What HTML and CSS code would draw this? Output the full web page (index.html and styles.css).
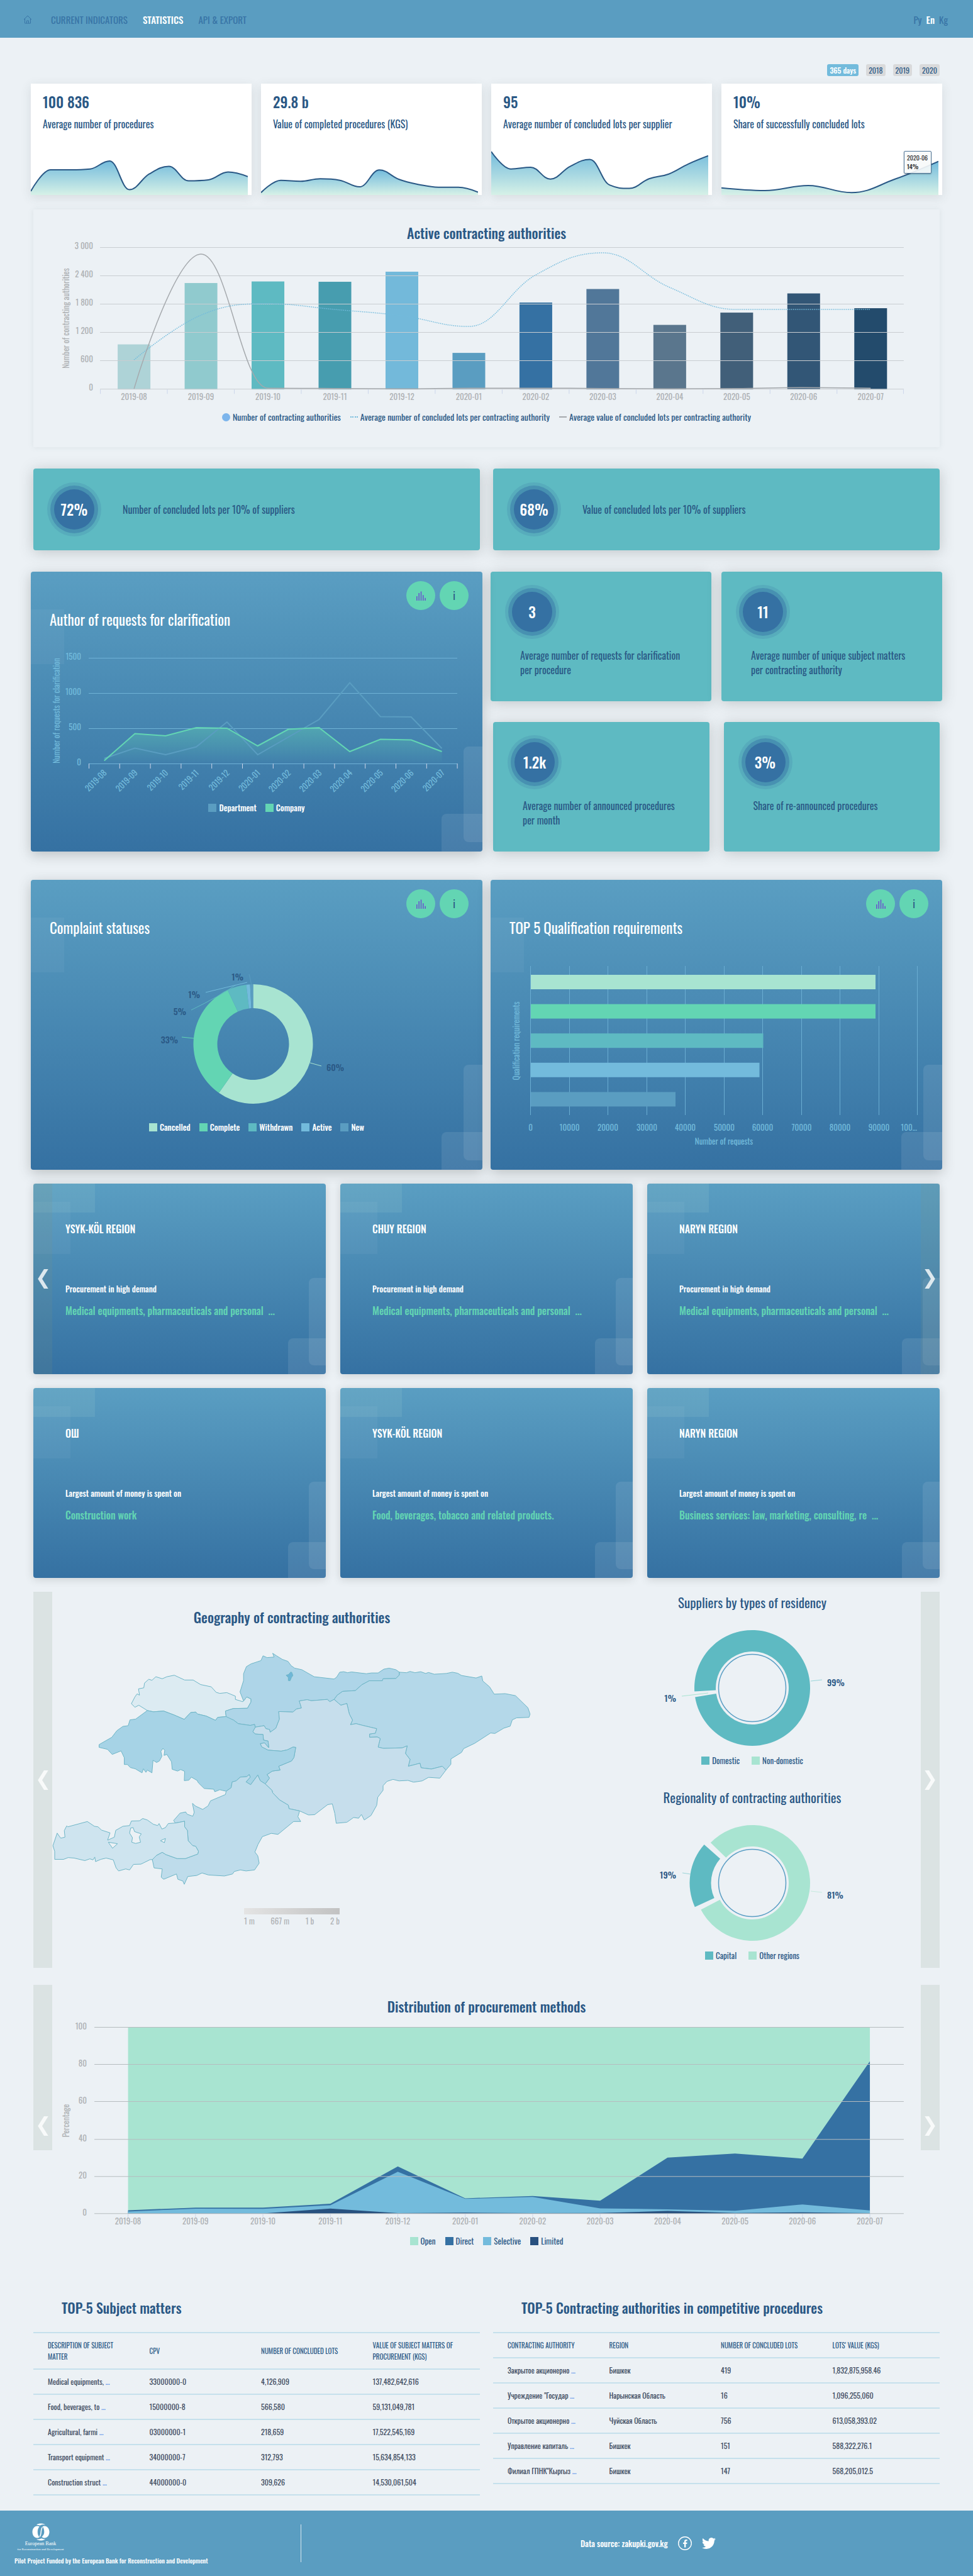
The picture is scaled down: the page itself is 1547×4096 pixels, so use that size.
FILE: index.html
```html
<!DOCTYPE html>
<html lang="en">
<head>
<meta charset="utf-8">
<meta name="viewport" content="width=device-width, initial-scale=1">
<title>Procurement statistics</title>
<link rel="stylesheet" href="styles.css">
</head>
<body>
<svg class="defs" aria-hidden="true">
  <defs>
    <linearGradient id="spark-fill" x1="0" y1="0" x2="0" y2="1">
      <stop offset="0" stop-color="#73bbdc"/><stop offset="1" stop-color="#d6f1e7"/>
    </linearGradient>
    <linearGradient id="company-fill" x1="0" y1="0" x2="0" y2="1">
      <stop offset="0" stop-color="#63d5b3" stop-opacity=".4"/><stop offset="1" stop-color="#63d5b3" stop-opacity="0"/>
    </linearGradient>
    <symbol id="i-bars" viewBox="0 0 18 18"><path d="M0 18V9.500h2V18zM4 18V3.500h2V18zM8 18V.5h2V18zM12 18V7.500h2V18zM16 18v-5h2v5z"/></symbol>
    <symbol id="i-prev" viewBox="0 0 18 32"><path d="M11 0h7L8 16l10 16h-7L1 16z"/></symbol>
    <symbol id="i-next" viewBox="0 0 18 32"><path d="M7 0H0l10 16L0 32h7l10-16z"/></symbol>
  </defs>
</svg>

<header class="topbar">
  <nav class="topbar-nav">
    <a href="#" aria-label="Home"><svg class="home" viewBox="0 0 14 14"><path d="M1 7l6-6 6 6M2.500 6v7h9V6M5.500 13V9h3v4"/></svg></a>
    <a href="#">CURRENT INDICATORS</a>
    <a href="#" class="active">STATISTICS</a>
    <a href="#">API &amp; EXPORT</a>
  </nav>
  <nav class="langs"><a href="#">Ру</a><a href="#" class="active">En</a><a href="#">Kg</a></nav>
</header>

<main>
  <div class="periods">
    <button class="active">365 days</button><button>2018</button><button>2019</button><button>2020</button>
  </div>

  <section class="kpis">
    <article class="kpi"><h2>100 836</h2><p>Average number of procedures</p><svg class="spark" viewBox="0 0 345 80" preserveAspectRatio="none" data-points="74,40,40,38.700,26,71.500,46.700,34.600,57.500,56,43.500,50.800"></svg></article>
    <article class="kpi"><h2>29.8 b</h2><p>Value of completed procedures (KGS)</p><svg class="spark" viewBox="0 0 345 80" preserveAspectRatio="none" data-points="76.300,56.700,58.300,54.300,56.700,67.100,40.300,55.300,63.400,67.700,67.700,75.500"></svg></article>
    <article class="kpi"><h2>95</h2><p>Average number of concluded lots per supplier</p><svg class="spark" viewBox="0 0 345 80" preserveAspectRatio="none" data-points="11,38.700,36,54.800,34.600,23.400,64.200,69.600,54.300,46.700,30.600,17.700"></svg></article>
    <article class="kpi"><h2>10%</h2><p>Share of successfully concluded lots</p><svg class="spark" viewBox="0 0 345 80" preserveAspectRatio="none" data-points="68.800,73,65,76.300,54.800,26.600"></svg><div class="tip">2020-06<b>14%</b></div></article>
  </section>

  <section class="panel">
    <h2 class="title">Active contracting authorities</h2>
    <svg id="authorities" viewBox="0 0 1440 258"></svg>
    <ul class="legend">
      <li><i class="dot"></i>Number of contracting authorities</li>
      <li><i class="dotted"></i>Average number of concluded lots per contracting authority</li>
      <li><i class="dash"></i>Average value of concluded lots per contracting authority</li>
    </ul>
  </section>

  <section class="banners">
    <article class="teal banner"><b class="bubble">72%</b><p>Number of concluded lots per 10% of suppliers</p></article>
    <article class="teal banner"><b class="bubble">68%</b><p>Value of concluded lots per 10% of suppliers</p></article>
  </section>

  <section class="halves">
    <article class="blue chart-card author">
      <div class="tools"><button aria-label="Chart"><svg><use href="#i-bars"/></svg></button><button aria-label="Info">i</button></div>
      <h2>Author of requests for clarification</h2>
      <svg id="requests" viewBox="0 0 718 238"></svg>
      <ul class="legend light"><li><i class="c-steel"></i>Department</li><li><i class="c-green"></i>Company</li></ul>
    </article>
    <div class="facts">
      <div class="fact-row">
        <article class="teal fact"><b class="bubble">3</b><p>Average number of requests for clarification<br>per procedure</p></article>
        <article class="teal fact"><b class="bubble">11</b><p>Average number of unique subject matters<br>per contracting authority</p></article>
      </div>
      <div class="fact-row inset">
        <article class="teal fact"><b class="bubble">1.2k</b><p>Average number of announced procedures<br>per month</p></article>
        <article class="teal fact"><b class="bubble">3%</b><p>Share of re-announced procedures</p></article>
      </div>
    </div>
  </section>

  <section class="halves second">
    <article class="blue chart-card complaint">
      <div class="tools"><button aria-label="Chart"><svg><use href="#i-bars"/></svg></button><button aria-label="Info">i</button></div>
      <h2>Complaint statuses</h2>
      <svg id="complaints" viewBox="0 0 718 256"></svg>
      <ul class="legend light"><li><i class="c-mint"></i>Cancelled</li><li><i class="c-green"></i>Complete</li><li><i class="c-teal"></i>Withdrawn</li><li><i class="c-sky"></i>Active</li><li><i class="c-steel"></i>New</li></ul>
    </article>
    <article class="blue chart-card qualification">
      <div class="tools"><button aria-label="Chart"><svg><use href="#i-bars"/></svg></button><button aria-label="Info">i</button></div>
      <h2>TOP 5 Qualification requirements</h2>
      <svg id="qualification" viewBox="0 0 718 306"></svg>
    </article>
  </section>

  <section class="regions">
    <button class="side prev" aria-label="Previous"><svg><use href="#i-prev"/></svg></button>
    <article class="blue region"><h3>YSYK-KÖL REGION</h3><p>Procurement in high demand</p><strong>Medical equipments, pharmaceuticals and personal &nbsp;...</strong></article>
    <article class="blue region"><h3>CHUY REGION</h3><p>Procurement in high demand</p><strong>Medical equipments, pharmaceuticals and personal &nbsp;...</strong></article>
    <article class="blue region"><h3>NARYN REGION</h3><p>Procurement in high demand</p><strong>Medical equipments, pharmaceuticals and personal &nbsp;...</strong></article>
    <button class="side next" aria-label="Next"><svg><use href="#i-next"/></svg></button>
  </section>
  <section class="regions">
    <article class="blue region"><h3>ОШ</h3><p>Largest amount of money is spent on</p><strong>Construction work</strong></article>
    <article class="blue region"><h3>YSYK-KÖL REGION</h3><p>Largest amount of money is spent on</p><strong>Food, beverages, tobacco and related products.</strong></article>
    <article class="blue region"><h3>NARYN REGION</h3><p>Largest amount of money is spent on</p><strong>Business services: law, marketing, consulting, re &nbsp;...</strong></article>
  </section>

  <section class="geo">
    <button class="side prev" aria-label="Previous"><svg><use href="#i-prev"/></svg></button>
    <div class="geo-map">
      <h2 class="title">Geography of contracting authorities</h2>
      <svg class="map" viewBox="90 270 1350 950" preserveAspectRatio="none">
        <path fill="#dcebf2" d="M313 487L323 460 329 448 336 453 333 428 348 424 350 405 362 390 371 394 382 380 400 388 413 380 434 374 463 393 487 393 508 411 538 420 552 442 562 446 582 443 606 457 606 470 627 479 638 460 650 468 650 480 640 505 600 506 578 516 580 538 556 541 550 553 524 536 500 528 494 520 480 522 462 549 434 532 404 516 375 519 358 514 334 493 323 501Z"/>
        <path fill="#aed5e8" d="M619 440L629 395 629 368 637 340 650 329 678 316 684 297 695 304 715 302 711 287 722 297 738 311 754 319 763 336 773 346 793 352 828 380 884 389 891 382 900 362 911 360 922 364 933 361 975 368 989 365 1008 365 1024 350 1039 346 1058 352 1068 362 1068 373 1058 387 1022 388 1020 396 983 396 962 412 944 435 908 438 893 453 884 470 872 479 865 470 820 475 808 471 786 476 792 504 778 508 768 520 728 518 730 548 720 584 704 600 702 589 692 586 687 574 662 580 660 569 648 573 614 566 601 552 580 540 578 516 600 506 640 505 650 480 650 468 638 460 629 476Z"/>
        <path fill="#b4d8e9" d="M884 470L893 453 908 438 944 435 962 412 983 396 1020 396 1022 388 1058 387 1068 373 1068 362 1088 364 1098 359 1112 364 1128 360 1142 367 1150 363 1166 370 1200 367 1217 362 1232 366 1243 375 1284 385 1300 377 1303 397 1322 420 1335 449 1366 447 1395 455 1430 503 1436 528 1433 541 1398 543 1386 551 1380 576 1362 584 1337 605 1325 603 1280 644 1249 665 1243 680 1213 706 1213 727 1199 750 1189 735 1158 746 1129 741 1126 723 1093 735 1098 708 1085 684 1090 654 1076 662 1023 664 1008 659 1014 625 1006 619 984 620 984 607 1000 604 1004 586 962 572 946 566 930 570 936 552 927 528 920 486 903 493Z"/>
        <path fill="#c6deec" d="M884 470L903 493 920 486 927 528 936 552 930 570 946 566 962 572 1004 586 1000 604 984 607 984 620 1006 619 1014 625 1008 659 1023 664 1076 662 1090 654 1085 684 1098 708 1093 735 1126 723 1129 741 1158 746 1189 735 1199 750 1182 782 1150 779 1132 793 1108 798 1092 791 1067 793 1050 787 1033 795 1022 812 1022 830 1007 858 1004 890 988 930 969 948 961 926 953 941 939 938 920 957 890 961 886 922 879 884 866 887 829 927 812 928 787 912 757 903 755 889 730 868 711 840 709 830 690 805 702 782 695 768 710 754 732 750 728 735 764 714 771 700 776 660 768 659 752 670 735 675 698 671 680 658 676 645 688 642 700 661 698 635 685 631 684 609 662 607 655 598 662 580 687 574 692 586 702 589 704 600 720 584 730 548 728 518 768 520 778 508 792 504 786 476 808 471 820 475 865 470 872 479Z"/>
        <path fill="#a6d3e6" d="M358 514L375 519 404 516 434 532 462 549 480 522 494 520 500 528 524 536 550 553 556 541 580 538 601 552 614 566 648 573 660 569 662 580 655 598 662 607 684 609 685 631 698 635 700 661 688 642 676 645 680 658 698 671 735 675 752 670 768 659 776 660 771 700 764 714 728 735 732 750 710 754 695 768 702 782 690 805 676 792 669 770 649 808 636 797 648 778 645 768 638 776 620 778 608 793 597 797 594 820 580 834 562 828 548 836 545 826 518 823 502 801 498 791 482 778 475 790 462 792 463 755 452 748 443 754 428 747 426 717 413 688 405 692 407 672 402 664 396 676 399 695 392 714 384 720 374 711 371 761 358 750 354 759 347 745 343 761 324 745 310 740 302 728 293 728 293 701 284 674 259 688 246 668 222 660 222 649 258 620 272 594 289 577 304 574 309 551 325 548Z"/>
        <path fill="#bedceb" d="M580 834L594 820 597 797 608 793 620 778 638 776 645 768 648 778 636 797 649 808 669 770 676 792 690 805 709 830 711 840 730 868 755 889 757 903 787 912 782 935 790 954 770 954 726 1005 707 1001 682 1014 670 1044 661 1075 669 1090 673 1119 660 1146 636 1150 620 1146 603 1152 598 1162 575 1170 530 1166 512 1158 497 1168 472 1172 462 1203 458 1190 444 1183 440 1162 404 1183 397 1175 400 1142 377 1138 372 1105 384 1088 400 1076 410 1085 442 1101 465 1101 500 1083 502 1072 494 1052 486 1050 473 1030 471 990 463 975 463 953 437 960 432 950 450 921 466 916 470 925 486 933 490 918 485 882 494 893 514 906 529 892 536 872 578 847Z"/>
        <path fill="#cee4ef" fill-rule="evenodd" d="M437 960L463 953 463 975 471 990 473 1030 486 1050 494 1052 502 1072 500 1083 465 1101 442 1101 410 1085 400 1076 384 1088 372 1105 366 1105 340 1123 319 1124 308 1146 297 1142 277 1150 270 1138 262 1106 242 1099 227 1104 212 1113 210 1095 205 1106 196 1102 182 1109 152 1099 135 1097 122 1104 97 1104 97 1072 92 1050 104 1000 114 1020 126 1016 124 990 131 971 134 975 189 954 209 973 219 975 229 988 253 999 246 1028 265 1016 269 989 289 973 308 970 313 952 336 951 345 942 358 948 375 965 387 970 391 962 399 984 409 978 417 962ZM311 980L318 978 322 994 341 1003 335 1015 339 1036 325 1041 314 1036 316 1018 308 1000ZM395 1030L409 1021 406 1038ZM248 1036L274 1042 260 1060Z"/>
        <path fill="#6fb7d8" d="M749 374L756 371 762 361 765 363 768 375 764 383 760 396 755 395 755 383Z"/>
      </svg>
      <div class="scale"><div class="scale-bar"></div><div class="scale-labels"><span>1 m</span><span>667 m</span><span>1 b</span><span>2 b</span></div></div>
    </div>
    <div class="geo-donuts">
      <h2 class="title plain">Suppliers by types of residency</h2>
      <svg id="residency" viewBox="0 0 536 209"></svg>
      <ul class="legend wide"><li><i class="c-teal"></i>Domestic</li><li><i class="c-mint"></i>Non-domestic</li></ul>
      <h2 class="title plain">Regionality of contracting authorities</h2>
      <svg id="regionality" viewBox="0 0 536 209"></svg>
      <ul class="legend wide"><li><i class="c-teal"></i>Capital</li><li><i class="c-mint"></i>Other regions</li></ul>
    </div>
    <button class="side next" aria-label="Next"><svg><use href="#i-next"/></svg></button>
  </section>

  <section class="methods">
    <button class="side prev" aria-label="Previous"><svg><use href="#i-prev"/></svg></button>
    <h2 class="title">Distribution of procurement methods</h2>
    <svg id="methods" viewBox="0 0 1440 346"></svg>
    <ul class="legend"><li><i class="c-mint"></i>Open</li><li><i class="c-blue"></i>Direct</li><li><i class="c-sky"></i>Selective</li><li><i class="c-navy"></i>Limited</li></ul>
    <button class="side next" aria-label="Next"><svg><use href="#i-next"/></svg></button>
  </section>

  <section class="tables">
    <div>
      <h2>TOP-5 Subject matters</h2>
      <table>
        <thead><tr><th>DESCRIPTION OF SUBJECT<br>MATTER</th><th>CPV</th><th>NUMBER OF CONCLUDED LOTS</th><th>VALUE OF SUBJECT MATTERS OF PROCUREMENT (KGS)</th></tr></thead>
        <tbody>
          <tr><td>Medical equipments, <a href="#">...</a></td><td>33000000-0</td><td>4,126,909</td><td>137,482,642,616</td></tr>
          <tr><td>Food, beverages, to <a href="#">...</a></td><td>15000000-8</td><td>566,580</td><td>59,131,049,781</td></tr>
          <tr><td>Agricultural, farmi <a href="#">...</a></td><td>03000000-1</td><td>218,659</td><td>17,522,545,169</td></tr>
          <tr><td>Transport equipment <a href="#">...</a></td><td>34000000-7</td><td>312,793</td><td>15,634,854,133</td></tr>
          <tr><td>Construction struct <a href="#">...</a></td><td>44000000-0</td><td>309,626</td><td>14,530,061,504</td></tr>
        </tbody>
      </table>
    </div>
    <div>
      <h2>TOP-5 Contracting authorities in competitive procedures</h2>
      <table>
        <thead><tr><th>CONTRACTING AUTHORITY</th><th>REGION</th><th>NUMBER OF CONCLUDED LOTS</th><th>LOTS' VALUE (KGS)</th></tr></thead>
        <tbody>
          <tr><td>Закрытое акционерно <a href="#">...</a></td><td>Бишкек</td><td>419</td><td>1,832,875,958.46</td></tr>
          <tr><td>Учреждение "Государ <a href="#">...</a></td><td>Нарынская Область</td><td>16</td><td>1,096,255,060</td></tr>
          <tr><td>Открытое акционерно <a href="#">...</a></td><td>Чуйская Область</td><td>756</td><td>613,058,393.02</td></tr>
          <tr><td>Управление капиталь <a href="#">...</a></td><td>Бишкек</td><td>151</td><td>588,322,276.1</td></tr>
          <tr><td>Филиал ГПНК"Кыргыз <a href="#">...</a></td><td>Бишкек</td><td>147</td><td>568,205,012.5</td></tr>
        </tbody>
      </table>
    </div>
  </section>
</main>

<footer>
  <div class="funder">
    <div class="bank">
      <svg viewBox="0 0 28 28"><path d="M8.500 4.500C3.500 4.500.5 9 .5 14s3 9.500 8 9.500c1.500 0 2.500-.5 3.200-1.200C9.500 20 8.800 17 8.800 14s.7-6.500 3-8.600C10.800 4.800 9.800 4.500 8.500 4.500zM19.500 4.500c5 0 8 4.500 8 9.500s-3 9.500-8 9.500c-1.500 0-3-.6-4-1.800 2.500-2 3.800-4.700 3.800-7.700S18.500 7 16.500 5.500c1-.7 2-1 3-1zM7 2.500C9 1 11.500.5 14 .5s5 .5 7 2c-3-.6-6-.3-8.500 1.200C10.500 3 9 2.700 7 2.500zM7 25.500c2 1.500 4.500 2 7 2s5-.5 7-2c-2 0-4-.3-6-1.200-2.500 1.200-5 1.500-8 1.200z"/><path class="s" d="M16.500 6.500C13 10 15.500 18 12 21.500"/></svg>
      <b>European Bank</b><small>for Reconstruction and Development</small>
    </div>
    <p>Pilot Project Funded by the European Bank for Reconstruction and Development</p>
  </div>
  <div class="source">
    <span>Data source: zakupki.gov.kg</span>
    <a href="#" aria-label="Facebook"><svg viewBox="0 0 24 24"><circle cx="12" cy="12" r="11.200" fill="none" stroke="#fff" stroke-width="1.500"/><path d="M13.500 19v-6h2l.4-2.500h-2.400V9c0-.8.3-1.200 1.300-1.200H16V5.600c-.4 0-1-.1-1.800-.1-2 0-3.300 1.100-3.300 3.200v1.800H8.800V13h2.100v6z"/></svg></a>
    <a href="#" aria-label="Twitter"><svg viewBox="0 0 24 24"><path d="M23.953 4.570a10 10 0 01-2.825.775 4.958 4.958 0 002.163-2.723c-.951.555-2.005.959-3.127 1.184a4.920 4.920 0 00-8.384 4.482C7.690 8.095 4.067 6.130 1.640 3.162a4.822 4.822 0 00-.666 2.475c0 1.710.87 3.213 2.188 4.096a4.904 4.904 0 01-2.228-.616v.06a4.923 4.923 0 003.946 4.827 4.996 4.996 0 01-2.212.085 4.936 4.936 0 004.604 3.417 9.867 9.867 0 01-6.102 2.105c-.39 0-.779-.023-1.170-.067a13.995 13.995 0 007.557 2.209c9.053 0 13.998-7.496 13.998-13.985 0-.21 0-.42-.015-.63A9.935 9.935 0 0024 4.590z"/></svg></a>
  </div>
</footer>
<script src="charts.js"></script>
</body>
</html>
```
FILE: styles.css
```css
* { box-sizing: border-box; }
body {
  margin: 0;
  background: #ecf1f5;
  color: #2a5885;
  font-family: Oswald, "Roboto Condensed", "DejaVu Sans Condensed", sans-serif;
  font-size: 13px;
  line-height: 20px;
}
h2, h3, p, ul { margin: 0; padding: 0; }
h2, h3, b, strong { font-weight: 500; }
button { font: inherit; border: 0; padding: 0; cursor: pointer; }
a { text-decoration: none; }
svg { display: block; overflow: visible; }
.defs { position: absolute; width: 0; height: 0; }

.topbar {
  display: flex;
  justify-content: space-between;
  align-items: center;
  height: 60px;
  padding: 2px 40px 0 37px;
  background: #5a9dc1;
  font-size: 15px;
}
.topbar a { color: #3874a6; }
.topbar a.active { color: #fff; font-weight: 500; }
.topbar-nav { display: flex; align-items: center; gap: 24px; }
.topbar-nav a:first-child { margin-right: 6px; }
.home { width: 14px; height: 14px; fill: none; stroke: #3874a6; }
.langs { display: flex; gap: 7px; }

main { padding: 42px 49px 24px; }

.periods { display: flex; justify-content: flex-end; gap: 12px; padding-right: 4px; }
.periods button {
  height: 19px;
  padding: 0 4px;
  border-radius: 3px;
  background: #d9dadb;
  color: #2a5885;
  font-size: 12px;
  line-height: 19px;
}
.periods .active { background: #73bbdc; color: #fff; font-weight: 500; }

.kpis { display: grid; grid-template-columns: repeat(4, 1fr); gap: 15px; margin-top: 12px; }
.kpi { position: relative; background: #fff; padding: 14px 0 0; box-shadow: 0 4px 16px rgba(60, 70, 70, .12); }
.kpi h2 { padding-left: 19px; font-size: 23px; line-height: 30px; }
.kpi p { padding: 8px 0 0 19px; font-size: 16px; line-height: 24px; }
.spark { width: calc(100% - 6px); height: 80px; margin-top: 21px; overflow: hidden; }
.tip {
  position: absolute;
  right: 17px;
  bottom: 34px;
  display: flex;
  flex-direction: column;
  width: 44px;
  padding: 3px 4px;
  border: 1px solid #52789a;
  border-radius: 2px;
  background: rgba(247, 249, 250, .9);
  color: #333;
  font-size: 10px;
  line-height: 14px;
  box-shadow: 0 1px 2px rgba(0, 0, 0, .3);
}

.panel { margin: 23px 4px 0; padding: 22px 0 38px; box-shadow: 0 0 8px rgba(120, 150, 150, .15); }
.title { text-align: center; font-size: 22px; line-height: 30px; }
.panel .title, .methods .title { margin-bottom: 2px; }
.title.plain { font-size: 21px; font-weight: normal; }

.legend { display: flex; justify-content: center; gap: 15px; list-style: none; }
.legend li { display: flex; align-items: center; gap: 4px; }
.legend i { width: 13px; height: 13px; }
.legend.wide { gap: 19px; }
.legend.light { color: #fff; font-weight: 500; gap: 14px; }
.panel .legend { margin-top: 8px; font-size: 14px; }
.legend .dot { border-radius: 50%; background: #7cb5ec; }
.legend .dotted { width: 12px; height: 0; border-top: 2px dotted #73bbdc; }
.legend .dash { width: 12px; height: 2px; background: #a5a9ad; }
.c-mint { background: #a8e4d1; }
.c-green { background: #63d5b3; }
.c-teal { background: #5ebac2; }
.c-sky { background: #73bbdc; }
.c-steel { background: #5a9dc1; }
.c-blue { background: #3571a3; }
.c-navy { background: #28517f; }

.teal { background: #5ebac2; border-radius: 4px; box-shadow: 0 3px 22px rgba(60, 70, 70, .25); font-size: 16px; line-height: 23px; }
.banners { display: grid; grid-template-columns: 1fr 1fr; gap: 21px; margin: 34px 4px 0; }
.banner { display: flex; align-items: center; gap: 45px; height: 130px; padding-left: 33px; }
.bubble {
  display: flex;
  align-items: center;
  justify-content: center;
  flex: none;
  width: 64px;
  height: 64px;
  border-radius: 50%;
  background: #3571a3;
  box-shadow: 0 0 0 6px rgba(53, 113, 163, .45), 0 0 0 11px rgba(53, 113, 163, .18);
  color: #fff;
  font-size: 23px;
}

.halves { display: grid; grid-template-columns: 1fr 1fr; gap: 13px; margin-top: 34px; }
.halves.second { margin-top: 45px; }
.blue {
  position: relative;
  overflow: hidden;
  border-radius: 4px;
  background: linear-gradient(#5a9ec2, #3571a2);
  color: #fff;
}
.blue::before, .blue::after { content: ""; position: absolute; right: 0; background: rgba(255, 255, 255, .09); }
.blue::after { width: 65px; height: 60px; bottom: 0; border-radius: 8px 0 0 0; }
.blue::before { width: 30px; height: 152px; bottom: 15px; border-radius: 8px 0 0 8px; }
.chart-card { display: flow-root; padding-top: 15px; }
.halves > * { min-width: 0; }
.halves > .blue { box-shadow: 0 5px 20px rgba(60, 70, 70, .28); background: linear-gradient(rgba(255, 255, 255, .04), rgba(255, 255, 255, .04)) 0 60px / 53px 87px no-repeat, linear-gradient(#5a9ec2, #3571a2); }
.tools { display: flex; justify-content: flex-end; gap: 7px; padding-right: 22px; }
.tools button {
  display: flex;
  align-items: center;
  justify-content: center;
  width: 46px;
  height: 46px;
  border-radius: 50%;
  background: #63d5b3;
  color: #2a5885;
  font-size: 16px;
}
.tools svg { width: 15px; height: 15px; fill: #6a5acd; }
.chart-card h2 { padding-left: 30px; margin: 0 0 34px; font-size: 23px; font-weight: normal; line-height: 30px; }
.chart-card .legend { margin-top: 2px; }
.author { padding-bottom: 60px; }
.complaint { padding-bottom: 58px; }
.qualification { padding-bottom: 30px; }

.facts { display: flex; flex-direction: column; justify-content: space-between; gap: 33px; }
.fact-row { display: grid; grid-template-columns: 1fr 1fr; gap: 16px; flex: 1; }
.fact-row.inset { padding: 0 4px; gap: 23px; }
.fact { padding: 32px 8px 0 34px; }
.fact p { padding: 26px 0 0 13px; }

.regions { position: relative; display: grid; grid-template-columns: repeat(3, 1fr); gap: 23px; margin: 22px 4px 0; }
.region { height: 303px; padding: 62px 20px 0 51px; box-shadow: 0 2px 14px rgba(60, 70, 70, .2); background:
  linear-gradient(rgba(170, 215, 210, .13), rgba(170, 215, 210, .13)) 0 0 / 98px 46px no-repeat,
  linear-gradient(rgba(255, 255, 255, .04), rgba(255, 255, 255, .04)) 0 29px / 59px 83px no-repeat,
  linear-gradient(#5a9ec2, #3571a2); }
.region::after { width: 60px; height: 57px; }
.region::before { width: 27px; height: 139px; bottom: 14px; }
.region h3 { font-size: 16px; line-height: 20px; }
.region p { margin-top: 75px; font-size: 13px; font-weight: 500; line-height: 20px; }
.region strong { display: block; margin-top: 13px; color: #63d5b3; font-size: 16px; line-height: 24px; white-space: nowrap; }
.regions + .regions .region { height: 302px; }

.side { display: flex; align-items: center; justify-content: center; width: 30px; background: rgba(130, 145, 130, .15); }
.side svg { width: 18px; height: 31px; fill: rgba(255, 255, 255, .8); }
.regions .side, .methods .side { position: absolute; top: 0; z-index: 1; }
.side.prev { left: 0; }
.side.next { right: 0; }
.regions .side { height: 100%; }

.geo { display: grid; grid-template-columns: 30px 762fr 83px 536fr 30px; margin: 22px 4px 0; }
.geo-map { padding-top: 25px; }
.geo-donuts { grid-column: 4; padding: 2px 0 10px; }
.map { width: 100%; height: 381px; margin-top: 36px; }
.map path { stroke: #6db5c6; stroke-width: 1px; vector-effect: non-scaling-stroke; stroke-linejoin: round; }
.scale { width: 152px; margin: 31px auto 0; color: #b0b3b6; }
.scale-bar { height: 10px; background: linear-gradient(90deg, #e4e4e4, #c2c2c2); }
.scale-labels { display: flex; justify-content: space-between; }
.geo-donuts svg { margin-top: 17px; }
.geo-donuts .legend + .title { margin-top: 34px; }

.methods { position: relative; margin: 27px 4px 0; padding-top: 19px; }
.methods .side { height: 263px; padding-top: 186px; }

.axis { fill: #adb0b3; font-size: 13px; }
.axis.sky { fill: #73bbdc; }
.grid { stroke: #c9cdd1; stroke-width: 1; }
.pct { fill: #2a5885; font-size: 14px; font-weight: 500; }

.tables { display: grid; grid-template-columns: 1fr 1fr; gap: 21px; margin: 81px 4px 0; }
.tables h2 { padding-left: 45px; margin-bottom: 24px; font-size: 22px; line-height: 30px; }
table { width: 100%; table-layout: fixed; border-collapse: collapse; border-top: 2px solid #c5e0ec; font-size: 12px; line-height: 18px; }
th, td { padding: 10px 8px 10px 0; border-bottom: 2px solid #c5e0ec; text-align: left; }
th { width: 25%; font-size: 11px; font-weight: normal; }
th:first-child, td:first-child { width: 26%; padding-left: 23px; }
th:last-child { width: 24%; }
td { color: #3c4a5e; }
td a { color: #4a86e8; }

footer { display: flex; height: 104px; background: #5a9dc1; color: #fff; font-weight: 500; }
footer svg { fill: #fff; }
.funder { width: 478px; padding: 20px 0 0 23px; }
.bank { display: flex; flex-direction: column; align-items: center; width: 83px; font-family: "Liberation Serif", serif; white-space: nowrap; }
.bank svg { width: 28px; height: 28px; }
.bank .s { fill: none; stroke: #fff; stroke-width: 1.500; }
.bank b { font-size: 8px; line-height: 10px; }
.bank small { font-size: 5px; line-height: 7px; }
.funder p { margin-top: 7px; font-size: 10px; line-height: 16px; }
.source { flex: 1; display: flex; align-items: center; gap: 16px; font-size: 13px; }
.source::before { content: ""; height: 60px; border-left: 1px solid #d7e6ef; margin-right: 428px; }
.source svg { width: 22px; height: 22px; }
```
FILE: charts.js
```js
const months = ['2019-08', '2019-09', '2019-10', '2019-11', '2019-12', '2020-01', '2020-02', '2020-03', '2020-04', '2020-05', '2020-06', '2020-07'];
const draw = (id, html) => { document.getElementById(id).innerHTML = html; };
const poly = (pts) => 'M' + pts.map((p) => p.join(' ')).join('L');
const text = (x, y, t, anchor = 'middle', cls = 'axis', extra = '') => `<text x="${x}" y="${y}" class="${cls}" text-anchor="${anchor}" ${extra}>${t}</text>`;
const hline = (x1, x2, y, color = '#c9cdd1') => `<path class="grid" style="stroke:${color}" d="M${x1} ${y}H${x2}"/>`;

// Smooth line that never overshoots a local extreme.
function spline(pts) {
  let d = `M${pts[0]}`;
  let out = pts[0];
  for (let i = 1; i < pts.length; i++) {
    const [x, y] = pts[i];
    const [px, py] = pts[i - 1];
    let inn = [x, y];
    let nextOut = [x, y];
    if (i < pts.length - 1) {
      const [nx, ny] = pts[i + 1];
      const lx = (1.5 * x + px) / 2.5, rx = (1.5 * x + nx) / 2.5;
      let ly = (1.5 * y + py) / 2.5, ry = (1.5 * y + ny) / 2.5;
      const c = ((ry - ly) * (rx - x)) / (rx - lx) + y - ry;
      ly += c; ry += c;
      if (ly > py && ly > y) { ly = Math.max(py, y); ry = 2 * y - ly; } else if (ly < py && ly < y) { ly = Math.min(py, y); ry = 2 * y - ly; }
      if (ry > ny && ry > y) { ry = Math.max(ny, y); ly = 2 * y - ry; } else if (ry < ny && ry < y) { ry = Math.min(ny, y); ly = 2 * y - ry; }
      inn = [lx, ly];
      nextOut = [rx, ry];
    }
    d += `C${out} ${inn} ${[x, y]}`;
    out = nextOut;
  }
  return d;
}

// Ring segment, angles in degrees clockwise from the top.
function ring(cx, cy, R, r, a, b, fill) {
  const at = (rad, deg) => { const t = (deg - 90) * Math.PI / 180; return [cx + rad * Math.cos(t), cy + rad * Math.sin(t)]; };
  const big = b - a > 180 ? 1 : 0;
  return `<path fill="${fill}" d="M${at(R, a)}A${R} ${R} 0 ${big} 1 ${at(R, b)}L${at(r, b)}A${r} ${r} 0 ${big} 0 ${at(r, a)}Z"/>`;
}

document.querySelectorAll('.spark').forEach((svg) => {
  const ys = svg.dataset.points.split(',').map(Number);
  const d = spline(ys.map((y, i) => [i * 345 / (ys.length - 1), y]));
  svg.innerHTML = `<path d="${d}V80H0Z" fill="url(#spark-fill)"/><path d="${d}" fill="none" stroke="#2a5885" stroke-width="2"/>`;
});

{
  const tops = [160.5, 63, 60.5, 61, 45, 174, 94, 72.500, 129.500, 110, 79.500, 103];
  const colors = ['#aed3d7', '#90cace', '#5ebac2', '#479daf', '#73b9da', '#5a9dc1', '#3571a3', '#517799', '#5a768d', '#415f79', '#325676', '#234b6c'];
  const lots = [185, 114, 96, 105, 115, 132, 50, 15, 70, 105, 105, 105];
  const value = [231, 17, 230, 230.500, 231, 230, 230, 230.500, 231, 230.500, 229, 230];
  const cx = (i) => 160 + i * 106.4;
  let s = '';
  tops.forEach((y, i) => { s += `<rect x="${cx(i) - 26}" y="${y}" width="52" height="${232 - y}" fill="${colors[i]}"/>`; });
  for (let i = 0; i < 6; i++) {
    s += hline(106, 1383, 6.5 + i * 45);
    s += text(95, 9 + i * 45, ['3 000', '2 400', '1 800', '1 200', '600', '0'][i], 'end');
  }
  months.forEach((m, i) => { s += `<path stroke="#ccd6eb" d="M${106.5 + i * 106.4} 232v7"/>` + text(cx(i), 249, m); });
  s += `<path stroke="#ccd6eb" d="M1382.500 232v7"/>`;
  s += `<path d="${spline(lots.map((y, i) => [cx(i), y]))}" fill="none" stroke="#73bbdc" stroke-width="1.500" stroke-dasharray="1.500 1.500"/>`;
  s += `<path d="${spline(value.map((y, i) => [cx(i), y]))}" fill="none" stroke="#a5a9ad" stroke-width="1.500"/>`;
  s += text(0, 0, 'Number of contracting authorities', 'middle', 'axis', 'transform="translate(57 119) rotate(-90)"');
  draw('authorities', s);
}

{
  const dep = [172, 155.500, 166, 153.500, 114, 166, 138, 110, 51.500, 105.500, 106, 156];
  const com = [175.500, 132.500, 136, 123, 124, 152, 125.500, 123, 161, 141.500, 142.500, 161];
  const x = (i) => 116.7 + i * 48.8;
  const at = (a) => a.map((y, i) => [x(i), y]);
  let s = '';
  ['1500', '1000', '500', '0'].forEach((t, i) => {
    const y = Math.round(12 + i * 56);
    s += hline(92, 678, y + .5, '#6fb2d6') + text(80, y + 3, t, 'end', 'axis sky');
  });
  s += `<path d="${poly(at(com))}V180H${x(0)}Z" fill="url(#company-fill)"/>`;
  s += `<path d="${poly(at(dep))}" fill="none" stroke="#5a9dc1" stroke-width="2"/><path d="${poly(at(com))}" fill="none" stroke="#63d5b3" stroke-width="2"/>`;
  for (let i = 0; i < 13; i++) s += `<path stroke="#ccd6eb" d="M${92.5 + i * 48.8} 180v8"/>`;
  months.forEach((m, i) => { s += text(0, 0, m, 'end', 'axis sky', `transform="translate(${x(i) + 5} 196) rotate(-45)"`); });
  s += text(0, 0, 'Number of requests for clarification', 'middle', 'axis sky', 'transform="translate(46 96) rotate(-90)"');
  draw('requests', s);
}

{
  const cx = 353.5, cy = 136;
  const c = ['#a8e4d1', '#63d5b3', '#5ebac2', '#73bbdc', '#5a9dc1'];
  const a = [0, 215, 334.7, 353.4, 357, 360];
  let s = c.map((f, i) => ring(cx, cy, 95, 57, a[i], a[i + 1], f)).join('');
  [['M444 166l18 5', 0], ['M259 127l-19-2', 1], ['M326 42Q300 60 255 82', 2], ['M344 38Q310 46 278 54', 3], ['M351 44q-1-8-4-19', 4]].forEach(([d, i]) => { s += `<path d="${d}" fill="none" stroke="${c[i]}"/>`; });
  s += text(470, 179, '60%', 'start', 'pct') + text(234, 135, '33%', 'end', 'pct') + text(247, 90, '5%', 'end', 'pct') + text(269, 63, '1%', 'end', 'pct') + text(338, 35, '1%', 'end', 'pct');
  draw('complaints', s);
}

{
  const ends = [612, 612, 433.5, 427.5, 294];
  const c = ['#a8e4d1', '#63d5b3', '#5ebac2', '#73bbdc', '#5a9dc1'];
  let s = '';
  for (let i = 0; i <= 10; i++) {
    const x = Math.round(63 + i * 61.5) + .5;
    s += `<path stroke="#6aadd2" d="M${x} 12v237"/>` + (i < 10 ? text(x, 274, i ? i * 10000 : 0, 'middle', 'axis sky') : text(678, 274, '100...', 'end', 'axis sky'));
  }
  ends.forEach((e, i) => { s += `<rect x="64" y="${26 + i * 46.6}" width="${e - 64}" height="23" fill="${c[i]}"/>`; });
  s += text(371, 296, 'Number of requests', 'middle', 'axis sky');
  s += text(0, 0, 'Qualification requirements', 'middle', 'axis sky', 'transform="translate(46 131) rotate(-90)"');
  draw('qualification', s);
}

{
  const circle = '<circle cx="268" cy="104" r="53.500" fill="none" stroke="#5a9ec4" stroke-width="1.500"/>';
  draw('residency', ring(268, 104, 92, 58, -93.5, 261, '#5ebac2') + circle +
    '<path stroke="#a8e4d1" d="M156 117l42-5"/><path stroke="#9ad5d9" d="M361 93l18-2"/>' +
    text(387, 101, '99%', 'start', 'pct') + text(147, 126, '1%', 'end', 'pct'));
  draw('regionality', ring(268, 104, 92, 58, -46, 242.5, '#a8e4d1') + ring(260.5, 104, 92, 58, 245.5, 311.5, '#5ebac2') + circle +
    '<path stroke="#9ad5d9" d="M157 88l13 2"/><path stroke="#c5eadf" d="M361 117l18 2"/>' +
    text(387, 129, '81%', 'start', 'pct') + text(147, 97, '19%', 'end', 'pct'));
}

{
  const direct = [1.8, 3.2, 3.2, 5.3, 25.3, 8.2, 9.4, 6.9, 30, 32.2, 29.5, 81.8];
  const selective = [1.1, 2.6, 2.5, 4.5, 22.4, 7.9, 8.9, 2.8, 2.3, 1.5, 4.9, 1.7];
  const limited = [.1, .1, .1, 2.7, .2, .5, .2, .3, 1.4, .3, .7, .2];
  const x = (i) => 150.5 + i * 107.15;
  const area = (v, f) => `<path fill="${f}" d="${poly(v.map((p, i) => [x(i), 312.5 - p * 2.96]))}V312.500H${x(0)}Z"/>`;
  let s = area(months.map(() => 100), '#a8e4d1') + area(direct, '#3571a3') + area(selective, '#73bbdc') + area(limited, '#28517f');
  for (let i = 0; i < 6; i++) {
    const y = Math.round(16 + i * 59.2) + .5;
    s += hline(97, 1383, y, '#b6bcbf') + text(85, y + 3, 100 - i * 20, 'end');
  }
  months.forEach((m, i) => { s += `<path stroke="#ccd6eb" d="M${x(i)} 313v6"/>` + text(x(i), 330, m); });
  s += text(0, 0, 'Percentage', 'middle', 'axis', 'transform="translate(57 165) rotate(-90)"');
  draw('methods', s);
}
```
